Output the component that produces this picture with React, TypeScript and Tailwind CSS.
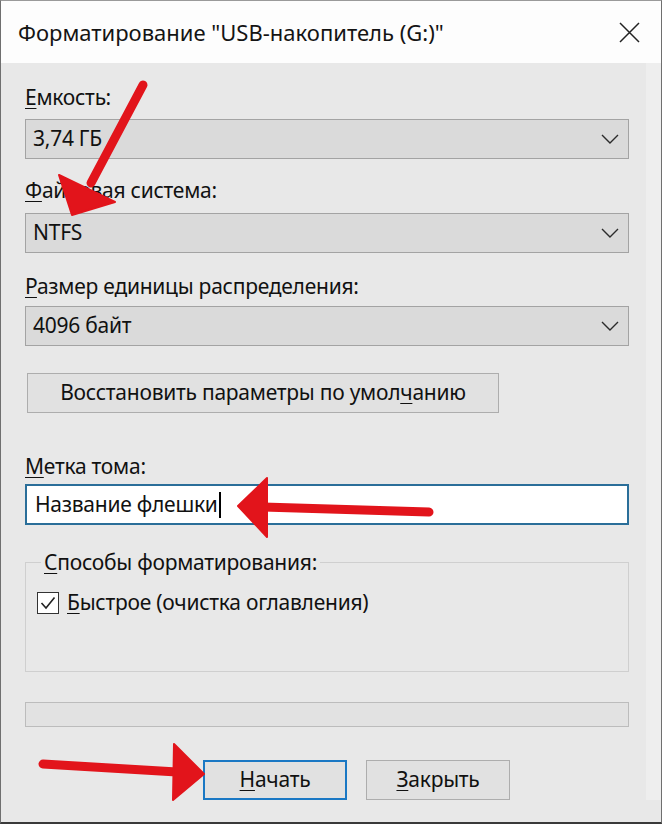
import { ReactNode } from "react";

function Chevron() {
  return (
    <svg width="18" height="10" viewBox="0 0 18 10" className="shrink-0">
      <polyline points="1,1 9,9 17,1" fill="none" stroke="#2b2b2b" strokeWidth="1.4" />
    </svg>
  );
}

function Label({ children, className = "" }: { children: ReactNode; className?: string }) {
  return <div className={`h-[28px] leading-[28px] text-[21px] text-[#111] ${className}`}>{children}</div>;
}

function Combo({ value }: { value: string }) {
  return (
    <div className="flex h-[40px] items-center justify-between border border-[#a3a3a3] bg-[#dadada] pl-[7px] pr-[9px] text-[21px] text-[#111]">
      <span>{value}</span>
      <Chevron />
    </div>
  );
}

function U({ children }: { children: ReactNode }) {
  return <span className="underline decoration-1 underline-offset-[3px]">{children}</span>;
}

export default function App() {
  return (
    <div className="relative h-[824px] w-[662px] overflow-hidden border-x border-t border-b-2 border-x-[#6f6f6f] border-t-[#9a9a9a] border-b-[#3a3a3a] bg-[#e8e8e8] font-['Noto_Sans',sans-serif] tracking-[-0.25px]">
      {/* Title bar */}
      <div className="flex h-[62px] items-center justify-between bg-[#fdfdfd] pl-[17px] pr-[21px]">
        <span className="text-[22px] tracking-normal text-[#141414]">Форматирование "USB-накопитель (G:)"</span>
        <svg width="21" height="21" viewBox="0 0 21 21">
          <path d="M1 1 L20 20 M20 1 L1 20" stroke="#222" strokeWidth="1.5" />
        </svg>
      </div>

      {/* Body */}
      <div className="flex">
        <div className="flex-1 pl-[24px] pr-[17px]">
          <Label className="mt-[20px]">
            <U>Е</U>мкость:
          </Label>
          <div className="mt-[8px]">
            <Combo value="3,74 ГБ" />
          </div>

          <Label className="mt-[17px]">
            <U>Ф</U>айловая система:
          </Label>
          <div className="mt-[9px]">
            <Combo value="NTFS" />
          </div>

          <Label className="mt-[19px]">
            <U>Р</U>азмер единицы распределения:
          </Label>
          <div className="mt-[6px]">
            <Combo value="4096 байт" />
          </div>

          <button className="mt-[27px] ml-[2px] flex h-[40px] w-[472px] items-center justify-center border border-[#adadad] bg-[#e1e1e1] text-[21px] text-[#111]">
            Восстановить параметры по умол<U>ч</U>анию
          </button>

          <Label className="mt-[39px]">
            <U>М</U>етка тома:
          </Label>
          <div className="mt-[4px] flex h-[41px] items-center border-2 border-[#2a6e99] bg-white pl-[8px] text-[21px] text-[#111]">
            <span>Название флешки</span>
            <span className="ml-[1px] inline-block h-[26px] w-[2px] bg-black" />
          </div>

          <fieldset className="mt-[23px] border border-[#cfcfcf] px-[11px] pb-[54px]">
            <legend className="ml-[4px] px-[3px] text-[21px] leading-[28px] text-[#111]">
              <U>С</U>пособы форматирования:
            </legend>
            <div className="mt-[13px] flex h-[28px] items-center gap-[8px] text-[21px] text-[#111]">
              <span className="flex h-[22px] w-[22px] items-center justify-center border border-[#333] bg-white">
                <svg width="16" height="14" viewBox="0 0 16 14">
                  <polyline points="1.5,7 6,12 14.5,1.5" fill="none" stroke="#222" strokeWidth="1.6" />
                </svg>
              </span>
              <span>
                <U>Б</U>ыстрое (очистка оглавления)
              </span>
            </div>
          </fieldset>

          <div className="mt-[30px] h-[25px] border border-[#bcbcbc] bg-[#e2e2e2]" />

          <div className="mt-[33px] flex gap-[19px] pl-[178px]">
            <button className="flex h-[40px] w-[144px] items-center justify-center border-2 border-[#1a78c4] bg-[#e1e1e1] text-[21px] text-[#111]">
              <U>Н</U>ачать
            </button>
            <button className="flex h-[40px] w-[144px] items-center justify-center border border-[#adadad] bg-[#e1e1e1] text-[21px] text-[#111]">
              <U>З</U>акрыть
            </button>
          </div>
        </div>
        <div className="w-[15px] bg-[#eeeeee]" />
      </div>

      {/* Red annotation arrows */}
      <svg className="pointer-events-none absolute left-0 top-0" width="662" height="824" viewBox="0 0 662 824">
        <g fill="#e2141b" stroke="#e2141b" strokeLinecap="round" strokeLinejoin="round">
          <line x1="142" y1="84" x2="90" y2="182" strokeWidth="9" />
          <polygon points="58,174 114,201 71,214" strokeWidth="2" />
          <line x1="428" y1="511" x2="262" y2="506" strokeWidth="9" />
          <polygon points="266,477 266,536 237,505" strokeWidth="2" />
          <line x1="42" y1="763" x2="176" y2="771" strokeWidth="9" />
          <polygon points="173,743 172,799 203,773" strokeWidth="2" />
        </g>
      </svg>
    </div>
  );
}
